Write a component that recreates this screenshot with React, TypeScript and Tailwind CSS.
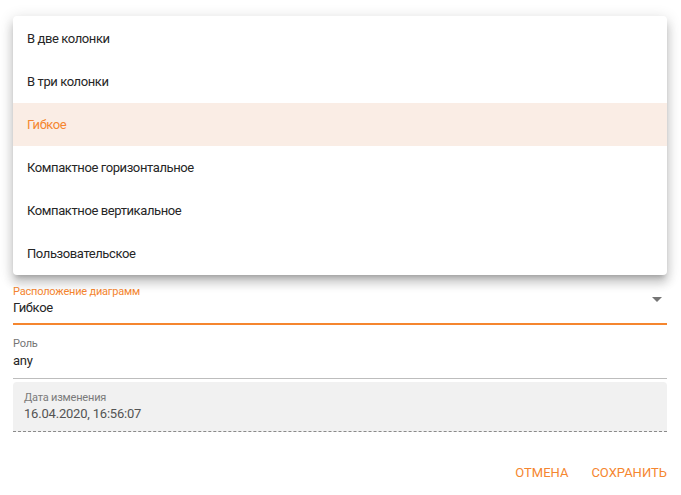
import React from "react";

const items = [
  "В две колонки",
  "В три колонки",
  "Гибкое",
  "Компактное горизонтальное",
  "Компактное вертикальное",
  "Пользовательское",
];

export default function App() {
  return (
    <div
      className="relative w-[681px] h-[495px] bg-white overflow-hidden"
      style={{ fontFamily: "Roboto, 'Liberation Sans', sans-serif" }}
    >
      <div className="flex flex-col px-[13px] pt-[285px] pr-[14px]">
        {/* Select field */}
        <div className="relative flex flex-col border-b-2 border-[#f5862f] pb-[6px]">
          <div className="text-[11px] tracking-[-0.2px] leading-[14px] text-[#f5862f]">Расположение диаграмм</div>
          <div className="text-[13px] tracking-[-0.3px] leading-[18px] text-[#262626]">Гибкое</div>
          <div className="absolute right-[5px] top-[12px] w-0 h-0 border-l-[5px] border-r-[5px] border-t-[5px] border-l-transparent border-r-transparent border-t-[#757575]" />
        </div>
        {/* Role field */}
        <div className="flex flex-col mt-[12px] border-b border-[#bdbdbd] pb-[7px]">
          <div className="text-[11px] tracking-[-0.2px] leading-[14px] text-[#757575]">Роль</div>
          <div className="text-[13px] tracking-[-0.2px] leading-[20px] text-[#262626]">any</div>
        </div>
        {/* Date field */}
        <div className="flex flex-col mt-[3px] bg-[#f1f1f1] rounded-t-[4px] px-[11px] pt-[8px] pb-[8px] border-b border-dashed border-[#8a8a8a]">
          <div className="text-[11px] tracking-[-0.2px] leading-[15px] text-[#7a7a7a]">Дата изменения</div>
          <div className="text-[13px] tracking-[-0.2px] leading-[18px] text-[#545454]">16.04.2020, 16:56:07</div>
        </div>
        {/* Buttons */}
        <div className="flex justify-end gap-[23px] mt-[32px]">
          <span className="text-[13px] leading-[18px] text-[#f5862f] uppercase">Отмена</span>
          <span className="text-[13px] leading-[18px] text-[#f5862f] uppercase">Сохранить</span>
        </div>
      </div>

      {/* Menu popup */}
      <div className="absolute left-[13px] top-[16px] w-[654px] bg-white rounded-[4px] shadow-[0_5px_5px_-3px_rgba(0,0,0,0.2),0_8px_10px_1px_rgba(0,0,0,0.14),0_3px_14px_2px_rgba(0,0,0,0.12)] flex flex-col pt-[1px]">
        {items.map((t) => (
          <div
            key={t}
            className={
              t === "Гибкое"
                ? "h-[43px] flex items-center px-[14px] text-[13px] tracking-[-0.4px] bg-[#faede5] text-[#f5862f]"
                : "h-[43px] flex items-center px-[14px] text-[13px] tracking-[-0.4px] text-[#262626]"
            }
          >
            {t}
          </div>
        ))}
      </div>
    </div>
  );
}
